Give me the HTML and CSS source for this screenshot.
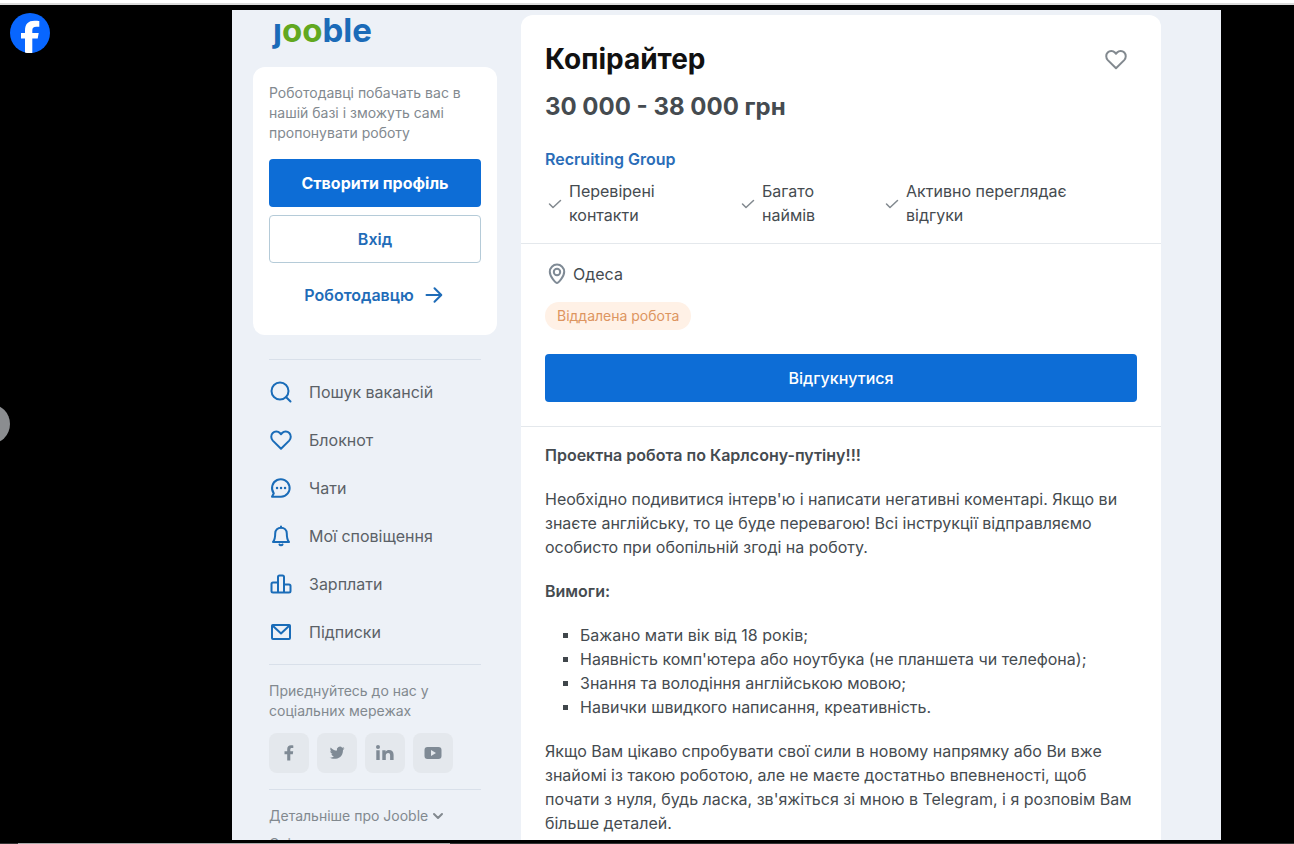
FILE: index.html
```html
<!DOCTYPE html>
<html lang="uk">
<head>
<meta charset="utf-8">
<meta name="viewport" content="width=device-width, initial-scale=1">
<title>Копірайтер – Jooble</title>
<link rel="stylesheet" href="styles.css">
</head>
<body>
<div class="topbar"></div>
<div class="stage">
  <a class="fb" href="#" aria-label="Facebook">
    <svg width="40" height="40" viewBox="0 0 40 40"><circle cx="20" cy="20" r="20" fill="#0866ff"/><path d="M15 39.400V25.500H11V20h4v-2.500C15 11 18.200 7.700 24.500 7.700c2 0 3.700.1 4.800.4v5.600h-3c-3 0-4 1.200-4 3.800V20h6.400l-1 5.500h-5.400V39.900a20 20 0 0 1-7.300-.5z" fill="#fff"/></svg>
  </a>
  <button class="prev" type="button" aria-label="Назад"></button>

  <div class="page">
    <aside class="sidebar">
      <a class="logo" href="#" aria-label="jooble">ȷ<span class="logo-oo">oo</span>ble</a>

      <section class="profile">
        <p class="profile-text">Роботодавці побачать вас в нашій базі і зможуть самі пропонувати роботу</p>
        <button class="btn btn-primary btn-bold" type="button">Створити профіль</button>
        <button class="btn btn-outline" type="button">Вхід</button>
        <a class="employer" href="#">Роботодавцю
          <svg width="24" height="24" viewBox="0 0 24 24" class="line"><path d="M4.500 12H19M12.500 5.200L19.300 12l-6.800 6.800"/></svg>
        </a>
      </section>

      <div class="side-body">
        <nav class="nav">
          <a href="#"><svg width="24" height="24" viewBox="0 0 24 24" class="line"><circle cx="11" cy="11" r="8.500"/><path d="M17.200 17.200l4.300 4.300"/></svg>Пошук вакансій</a>
          <a href="#"><svg width="24" height="24" viewBox="0 0 24 24" class="line"><path d="M12 20.800L3.800 12.600C1.800 10.500 1.700 7 3.700 5c2-2.100 5.300-2 7.200 0L12 6.200 13.100 5c1.900-2 5.200-2.100 7.200 0s1.900 5.500-.1 7.600z"/></svg>Блокнот</a>
          <a href="#"><svg width="24" height="24" viewBox="0 0 24 24" class="line"><path d="M3 20.800l1.800-3.500A8.800 8.800 0 1 1 12 20.800z"/><path d="M8 12h.1M12 12h.1M16 12h.1" stroke-width="2.400"/></svg>Чати</a>
          <a href="#"><svg width="24" height="24" viewBox="0 0 24 24" class="line"><path d="M4 18c1.800-2 2.200-3.500 2.200-8.500C6.200 6 8.800 3.800 12 3.800s5.800 2.200 5.800 5.700c0 5 .4 6.500 2.200 8.500z"/><path d="M12 2.500v1M10.500 20.500c.4.900 2.600.9 3 0"/></svg>Мої сповіщення</a>
          <a href="#"><svg width="24" height="24" viewBox="0 0 24 24" class="line"><path d="M9 20.500H4a1.500 1.500 0 0 1-1.500-1.500v-7A1.500 1.500 0 0 1 4 10.500h5zM9 20.500V5a1.500 1.500 0 0 1 1.500-1.500h3A1.500 1.500 0 0 1 15 5v15.500zM15 20.500v-8h5a1.500 1.500 0 0 1 1.500 1.500v5a1.500 1.500 0 0 1-1.500 1.500z"/></svg>Зарплати</a>
          <a href="#"><svg width="24" height="24" viewBox="0 0 24 24" class="line"><rect x="3" y="5" width="18" height="14" rx="1"/><path d="M3.500 5.500L12 13.500l8.500-8"/></svg>Підписки</a>
        </nav>

        <section class="social">
          <p class="social-text">Приєднуйтесь до нас у соціальних мережах</p>
          <div class="social-row">
            <a href="#" aria-label="Facebook"><svg width="24" height="24" viewBox="0 0 24 24"><path d="M10.200 19.500v-6.300H7.500v-3h2.700V8.200c0-2.600 1.500-4 3.800-4 1 0 1.800.1 2.300.2v2.700h-1.500c-1.200 0-1.500.6-1.500 1.500v1.600h2.900l-.4 3h-2.500v6.300z"/></svg></a>
            <a href="#" aria-label="Twitter"><svg width="24" height="24" viewBox="0 0 24 24"><path d="M19.500 7.300c-.6.3-1.100.4-1.700.5.600-.4 1.100-1 1.300-1.700-.6.400-1.200.6-1.900.7a3 3 0 0 0-5.200 2.800C9.500 9.500 7.200 8.300 5.700 6.400c-.8 1.400-.4 3.200 1 4.100-.5 0-1-.2-1.400-.4 0 1.500 1 2.700 2.400 3-.4.1-.9.100-1.300.1.400 1.200 1.500 2 2.800 2.100A6.200 6.200 0 0 1 4.500 16.600c4.200 2.600 13.500 1.700 13.500-7.700.6-.4 1.100-1 1.500-1.600z"/></svg></a>
            <a href="#" aria-label="LinkedIn"><svg width="24" height="24" viewBox="0 0 24 24"><circle cx="5" cy="6" r="2"/><path d="M3.300 9.300h3.400V19H3.300zM9.300 9.300h3.300v1.400c.7-1.100 1.900-1.700 3.400-1.700 3 0 4.600 1.800 4.600 4.800V19h-3.500v-4.800c0-1.400-.6-2.300-2-2.300s-2.300 1-2.300 2.400V19H9.300z"/></svg></a>
            <a href="#" aria-label="YouTube"><svg width="24" height="24" viewBox="0 0 24 24"><path fill-rule="evenodd" d="M6.500 6h11a3 3 0 0 1 3 3v6a3 3 0 0 1-3 3h-11a3 3 0 0 1-3-3V9a3 3 0 0 1 3-3zM10 9v6l5-3z"/></svg></a>
          </div>
        </section>

        <div class="more">
          <a href="#">Детальніше про Jooble<svg width="12" height="12" viewBox="0 0 12 12" class="line"><path d="M2 4l4 4 4-4"/></svg></a>
          <a href="#">Співпраця</a>
        </div>
      </div>
    </aside>

    <main class="job">
      <header class="head">
        <div class="title-row">
          <h1>Копірайтер</h1>
          <button class="save" type="button" aria-label="Зберегти"><svg width="24" height="24" viewBox="0 0 24 24" class="line"><path d="M12 21.300L3.800 13.100C1.800 11 1.700 7.500 3.700 5.500c2-2.100 5.300-2 7.200 0L12 6.700l1.100-1.200c1.900-2 5.200-2.100 7.200 0s1.900 5.500-.1 7.600z"/></svg></button>
        </div>
        <p class="salary">30 000 - 38 000 грн</p>
        <a class="company" href="#">Recruiting Group</a>
        <ul class="checks">
          <li><svg width="24" height="24" viewBox="0 0 24 24" class="line"><path d="M4.500 13l3.500 3.500 7.500-7"/></svg><span>Перевірені<br>контакти</span></li>
          <li><svg width="24" height="24" viewBox="0 0 24 24" class="line"><path d="M4.500 13l3.500 3.500 7.500-7"/></svg><span>Багато<br>наймів</span></li>
          <li><svg width="24" height="24" viewBox="0 0 24 24" class="line"><path d="M4.500 13l3.500 3.500 7.500-7"/></svg><span>Активно переглядає<br>відгуки</span></li>
        </ul>
      </header>

      <section class="apply">
        <p class="place"><svg width="24" height="24" viewBox="0 0 24 24" class="line"><path d="M12 21c-1 0-7.200-6-7.200-11.200a7.200 7.200 0 0 1 14.400 0C19.200 15 13 21 12 21z"/><circle cx="12" cy="10" r="3.200"/></svg>Одеса</p>
        <span class="tag">Віддалена робота</span>
        <button class="btn btn-primary" type="button">Відгукнутися</button>
      </section>

      <section class="desc">
        <h2>Проектна робота по Карлсону-путіну!!!</h2>
        <p>Необхідно подивитися інтерв'ю і написати негативні коментарі. Якщо ви знаєте англійську, то це буде перевагою! Всі інструкції відправляємо особисто при обопільній згоді на роботу.</p>
        <h2>Вимоги:</h2>
        <ul>
          <li>Бажано мати вік від 18 років;</li>
          <li>Наявність комп'ютера або ноутбука (не планшета чи телефона);</li>
          <li>Знання та володіння англійською мовою;</li>
          <li>Навички швидкого написання, креативність.</li>
        </ul>
        <p>Якщо Вам цікаво спробувати свої сили в новому напрямку або Ви вже знайомі із такою роботою, але не маєте достатньо впевненості, щоб почати з нуля, будь ласка, зв'яжіться зі мною в Telegram, і я розповім Вам більше деталей.</p>
      </section>
    </main>
  </div>
</div>
<div class="bottombar"></div>
</body>
</html>
```
FILE: styles.css
```css
* { box-sizing: border-box; }
body, h1, h2, p, ul { margin: 0; padding: 0; }
ul { list-style: none; }
a { color: inherit; text-decoration: none; }
button { font: inherit; cursor: pointer; }

body {
  display: flex;
  flex-direction: column;
  height: 100vh;
  overflow: hidden;
  background: #000;
  color: #454b50;
  font: 400 16px/24px Inter, "Liberation Sans", sans-serif;
}

.line {
  fill: none;
  stroke: currentColor;
  stroke-width: 2;
  stroke-linecap: round;
  stroke-linejoin: round;
}

.topbar {
  flex: none;
  height: 5px;
  background: #fff;
  border-bottom: 2px solid #dcdcdc;
}

.bottombar {
  flex: none;
  height: 1px;
  background: linear-gradient(90deg, #333 18px, #aaa 18px, #aaa 450px, #333 450px);
}

.stage {
  position: relative;
  flex: 1;
  min-height: 0;
  display: flex;
  padding: 5px 73px 3px 232px;
}

.fb {
  position: absolute;
  left: 10px;
  top: 8px;
  height: 40px;
}

.prev {
  position: absolute;
  left: -30px;
  top: 50%;
  width: 40px;
  height: 40px;
  margin-top: -20px;
  border: 0;
  border-radius: 50%;
  background: #8b8d90;
}

.page {
  flex: 1;
  min-width: 0;
  display: flex;
  align-items: flex-start;
  gap: 24px;
  padding: 0 60px 0 21px;
  background: #edf1f7;
  overflow: hidden;
}

.sidebar {
  flex: none;
  width: 244px;
}

.logo {
  display: block;
  height: 57px;
  padding-left: 20px;
  font-size: 33px;
  line-height: 40px;
  font-weight: 700;
  color: #1b6bb8;
}
.logo-oo { color: #62a820; }

.profile {
  display: flex;
  flex-direction: column;
  gap: 8px;
  padding: 16px;
  border-radius: 12px;
  background: #fff;
}
.profile-text {
  margin-bottom: 8px;
  font-size: 14px;
  line-height: 20px;
  color: #82898f;
}

.btn {
  height: 48px;
  border: 0;
  border-radius: 4px;
  font-weight: 500;
}
.btn-primary {
  background: #0d6dd6;
  color: #fff;
}
.btn-bold { font-weight: 700; }
.btn-outline {
  border: 1px solid #b5cbd8;
  background: #fff;
  color: #1f6cb8;
  font-weight: 600;
}

.employer {
  display: flex;
  align-items: center;
  justify-content: center;
  gap: 8px;
  height: 48px;
  color: #1f6cb8;
  font-weight: 600;
}

.side-body { padding: 24px 16px 0; }

.nav {
  padding: 8px 0;
  border-top: 1px solid #d9e0ea;
  border-bottom: 1px solid #d9e0ea;
}
.nav a {
  display: flex;
  align-items: center;
  gap: 16px;
  height: 48px;
  color: #5b6167;
}
.nav svg { color: #1a6cb8; }

.social {
  padding: 16px 0;
  border-bottom: 1px solid #d9e0ea;
}
.social-text {
  margin-bottom: 12px;
  font-size: 14px;
  line-height: 20px;
  color: #82898f;
}
.social-row {
  display: flex;
  gap: 8px;
}
.social-row a {
  display: grid;
  place-items: center;
  width: 40px;
  height: 40px;
  border-radius: 8px;
  background: #e4e8ed;
}
.social-row svg { fill: #7f8a95; }

.more {
  display: flex;
  flex-direction: column;
  gap: 8px;
  padding-top: 16px;
  font-size: 14px;
  line-height: 20px;
  color: #82898f;
}
.more a {
  display: flex;
  align-items: center;
  gap: 4px;
}

.job {
  flex: 1;
  min-width: 0;
  margin-top: 5px;
  border-radius: 12px 12px 0 0;
  background: #fff;
}

.head {
  display: flex;
  flex-direction: column;
  align-items: flex-start;
  padding: 24px 24px 16px;
  border-bottom: 1px solid #e4e8ec;
}
.title-row {
  display: flex;
  justify-content: space-between;
  align-items: center;
  width: 100%;
  padding-right: 9px;
}
h1 {
  font-size: 28px;
  line-height: 40px;
  font-weight: 700;
  color: #111;
}
.save {
  height: 24px;
  padding: 0;
  border: 0;
  background: none;
  color: #82898f;
}
.salary {
  margin: 12px 0 24px;
  font-size: 24px;
  line-height: 32px;
  font-weight: 700;
}
.company {
  margin-bottom: 8px;
  color: #2a6db8;
  font-weight: 600;
}
.checks {
  display: grid;
  grid-template-columns: 193px 144px auto;
}
.checks li {
  display: flex;
  align-items: center;
}
.checks svg {
  color: #82898f;
  stroke-width: 1.500;
}

.apply {
  display: flex;
  flex-direction: column;
  align-items: flex-start;
  padding: 18px 24px 24px;
  border-bottom: 1px solid #e4e8ec;
}
.place {
  display: flex;
  align-items: center;
  gap: 4px;
}
.place svg { color: #7f8a95; }
.tag {
  margin: 16px 0 24px;
  padding: 4px 12px;
  border-radius: 14px;
  background: #fff1e6;
  color: #dd9560;
  font-size: 14px;
  line-height: 20px;
}
.apply .btn { width: 100%; }

.desc {
  display: flex;
  flex-direction: column;
  gap: 20px;
  padding: 16px 24px 24px;
}
h2 {
  font-size: 16px;
  line-height: 24px;
  font-weight: 600;
}
.desc li {
  display: flex;
  align-items: center;
  gap: 12px;
  padding-left: 18px;
}
.desc li::before {
  content: "";
  width: 5px;
  height: 5px;
  background: #40464b;
}
```
